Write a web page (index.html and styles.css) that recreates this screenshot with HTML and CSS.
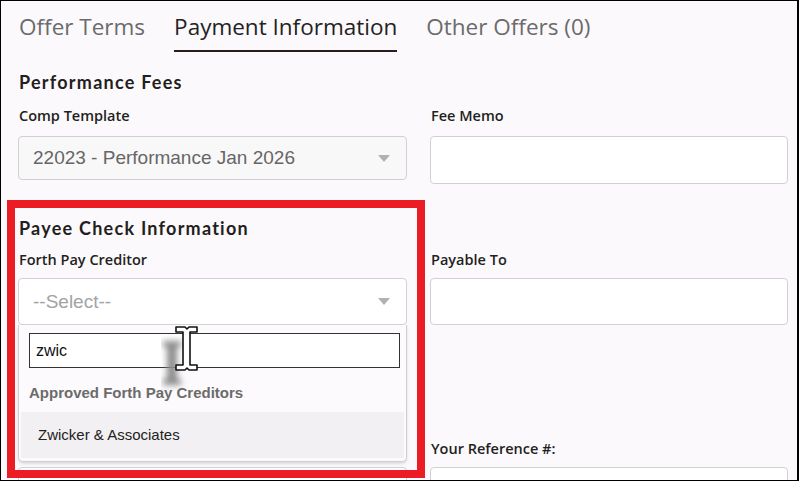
FILE: index.html
```html
<!DOCTYPE html>
<html lang="en">
<head>
    <meta charset="UTF-8">
    <meta name="viewport" content="width=device-width, initial-scale=1.0">
    <title>Payment Information</title>
    <link rel="stylesheet" href="styles.css">
</head>
<body>
    <div class="frame">
        <div class="tabs">
            <span class="tab">Offer Terms</span>
            <span class="tab active">Payment Information</span>
            <span class="tab">Other Offers (0)</span>
        </div>

        <div class="section">
            <h2 class="section-title">Performance Fees</h2>
            <div class="grid">
                <div class="field">
                    <label>Comp Template</label>
                    <div class="select disabled">
                        <span>22023 - Performance Jan 2026</span>
                        <i class="caret"></i>
                    </div>
                </div>
                <div class="field">
                    <label>Fee Memo</label>
                    <div class="input tall"></div>
                </div>
            </div>
        </div>

        <div class="section payee">
            <h2 class="section-title">Payee Check Information</h2>
            <div class="grid">
                <div class="field open">
                    <label>Forth Pay Creditor</label>
                    <div class="select">
                        <span class="placeholder">--Select--</span>
                        <i class="caret"></i>
                    </div>
                    <!-- dropdown menu lies over the fields below -->
                    <div class="dropdown">
                        <div class="search">zwic</div>
                        <div class="group">Approved Forth Pay Creditors</div>
                        <div class="option">Zwicker &amp; Associates</div>
                    </div>
                </div>
                <div class="field">
                    <label>Payable To</label>
                    <div class="input"></div>
                </div>
                <div class="spacer"></div>
                <div class="spacer"></div>
                <div class="field">
                    <label>&nbsp;</label>
                    <div class="input"></div>
                </div>
                <div class="field">
                    <label>Your Reference #:</label>
                    <div class="input"></div>
                </div>
            </div>
        </div>

        <div class="highlight"></div>

        <svg class="cursor" width="40" height="66" viewBox="0 0 40 66">
            <defs>
                <filter id="blur" x="-50%" y="-50%" width="200%" height="200%">
                    <feGaussianBlur stdDeviation="3"/>
                </filter>
            </defs>
            <g filter="url(#blur)" fill="#8c8c8c">
                <rect x="2" y="15" width="18" height="6"/>
                <rect x="6" y="17" width="10" height="40"/>
                <rect x="2" y="53" width="18" height="6"/>
            </g>
            <path d="M15 1 H24 L26 3 L28 1 H36 V6 H29 V39 H36 V44 H28 L26 42 L24 44 H15 V39 H22 V6 H15 Z"
                  fill="#fff" stroke="#111" stroke-width="1.6" stroke-linejoin="round"/>
        </svg>
    </div>
</body>
</html>
```

FILE: styles.css
```css
html, body {
    margin: 0;
    background: #fff;
}
.frame {
    position: relative;
    box-sizing: border-box;
    width: 799px;
    height: 481px;
    border: 1px solid #000;
    border-right-width: 2px;
    background: #fcf9fc;
    overflow: hidden;
    font-family: 'Open Sans', sans-serif;
    color: #231f20;
}

/* tabs */
.tabs {
    display: flex;
    align-items: flex-start;
    gap: 29px;
    padding: 9px 0 0 18px;
}
.tab {
    font-size: 22.5px;
    line-height: 34px;
    color: #6b6b6b;
    white-space: nowrap;
}
.tab.active {
    color: #222;
    height: 42px;
    box-sizing: border-box;
    border-bottom: 2px solid #2b1c1e;
}

/* sections */
.section {
    padding: 0 11px 0 17px;
}
.section-title {
    font-family: 'Lato', sans-serif;
    font-weight: 700;
    font-size: 18px;
    line-height: 22px;
    letter-spacing: 1.25px;
    margin: 19px 0 13px 1px;
    color: #231f20;
}
.payee .section-title {
    margin-top: 33px;
    margin-bottom: 11px;
}
.grid {
    display: grid;
    grid-template-columns: 389px 358px;
    column-gap: 23px;
}
.field {
    position: relative;
}
.field label {
    display: block;
    font-weight: 600;
    font-size: 14.5px;
    line-height: 20px;
    margin: 0 0 10px 1px;
    color: #231f20;
}
.payee .field label {
    margin-bottom: 8px;
}
.spacer {
    height: 114px;
}

/* controls */
.select,
.input {
    box-sizing: border-box;
    height: 47px;
    border: 1px solid #d2d0d2;
    border-radius: 4px;
    background: #fff;
}
.input.tall {
    height: 48px;
}
.select {
    display: flex;
    align-items: center;
    justify-content: space-between;
    padding: 0 16px 0 14px;
    font-family: 'Liberation Sans', Arial, sans-serif;
    font-size: 19px;
    color: #666;
}
.select.disabled {
    height: 44px;
    background: #f9f8f9;
}
.placeholder {
    color: #a3a3a3;
}
.caret {
    width: 0;
    height: 0;
    border-left: 6px solid transparent;
    border-right: 6px solid transparent;
    border-top: 7px solid #b1b1b1;
}

/* dropdown */
.dropdown {
    position: absolute;
    top: 75px;
    left: 0;
    width: 389px;
    height: 137px;
    box-sizing: border-box;
    padding: 8px 8px 0 8px;
    background: #fcfafc;
    border: 1px solid #cfcdcf;
    border-top: none;
    border-radius: 0 0 5px 5px;
    box-shadow: 0 2px 3px rgba(0, 0, 0, 0.12);
    font-family: 'Liberation Sans', Arial, sans-serif;
    z-index: 2;
}
.search {
    box-sizing: border-box;
    height: 35px;
    margin-left: 2px;
    width: 371px;
    border: 1px solid #333;
    background: #fff;
    padding: 0 0 0 6px;
    font-size: 16px;
    line-height: 33px;
    color: #111;
}
.group {
    font-weight: 700;
    font-size: 15px;
    color: #6b6b6b;
    padding: 16px 0 0 2px;
    line-height: 18px;
}
.option {
    margin: 10px -6px 0 -6px;
    padding: 0 0 0 17px;
    height: 46px;
    line-height: 46px;
    font-size: 15px;
    color: #222;
    background: #f3f0f3;
}

/* annotation */
.highlight {
    position: absolute;
    left: 6px;
    top: 199px;
    width: 402px;
    height: 262px;
    border: 8px solid #ec1c24;
    z-index: 3;
}
.cursor {
    position: absolute;
    left: 160px;
    top: 325px;
    z-index: 4;
}
```
